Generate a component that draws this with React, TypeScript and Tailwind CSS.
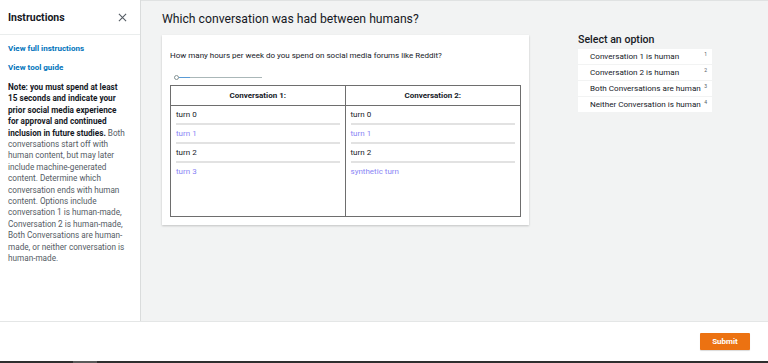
import React from 'react';

const turns1 = ['turn 0', 'turn 1', 'turn 2', 'turn 3'];
const turns2 = ['turn 0', 'turn 1', 'turn 2', 'synthetic turn'];
const options = [
  'Conversation 1 is human',
  'Conversation 2 is human',
  'Both Conversations are human',
  'Neither Conversation is human',
];

const boldLines = [
  'Note: you must spend at least',
  '15 seconds and indicate your',
  'prior social media experience',
  'for approval and continued',
];
const plainLines = [
  'conversations start off with',
  'human content, but may later',
  'include machine-generated',
  'content. Determine which',
  'conversation ends with human',
  'content. Options include',
  'conversation 1 is human-made,',
  'Conversation 2 is human-made,',
  'Both Conversations are human-',
  'made, or neither conversation is',
  'human-made.',
];

const TurnCell: React.FC<{ turns: string[] }> = ({ turns }) => (
  <div className="px-[5px]">
    {turns.map((t, i) => (
      <div
        key={i}
        className={`h-[19px] leading-[17px] text-[8px] ${i % 2 ? 'text-[#8a85f5]' : 'text-[#16191f]'} ${i < turns.length - 1 ? 'border-b-2 border-[#e2e2e2]' : ''}`}
      >
        {t}
      </div>
    ))}
  </div>
);

const App: React.FC = () => {
  return (
    <div className="w-[768px] h-[363px] flex flex-col bg-white overflow-hidden font-['Roboto',sans-serif] text-[#16191f]">
      <div className="flex h-[322px] border-b border-[#e4e6e6]">
        {/* Instructions panel */}
        <aside className="w-[141px] shrink-0 border-r border-[#dadcdc] bg-white">
          <div className="h-[35px] flex items-center justify-between pl-[8px] pr-[13px] border-b border-[#eaeded]">
            <span className="text-[10.5px] font-bold text-[#16191f] pt-px">Instructions</span>
            <svg width="9" height="9" viewBox="0 0 10 10" className="text-[#545b64]">
              <path d="M1 1 L9 9 M9 1 L1 9" stroke="currentColor" strokeWidth="1.2" />
            </svg>
          </div>
          <div className="pl-[8px] pr-[4px] pt-[8px]">
            <div className="text-[8px] font-bold text-[#0073bb] leading-[11px]">View full instructions</div>
            <div className="text-[8px] font-bold text-[#0073bb] leading-[11px] mt-[8px]">View tool guide</div>
            <div className="mt-[9px] text-[8.2px] leading-[11.4px] text-[#545b64] whitespace-nowrap">
              {boldLines.map((l) => (
                <div key={l} className="font-bold text-[#16191f]">{l}</div>
              ))}
              <div>
                <b className="text-[#16191f]">inclusion in future studies.</b> Both
              </div>
              {plainLines.map((l) => (
                <div key={l}>{l}</div>
              ))}
            </div>
          </div>
        </aside>

        {/* Main area */}
        <main className="flex-1 bg-[#f2f3f3] border-t border-[#e0e2e2] flex">
          <div className="pl-[21px] pt-[9px]">
            <h1 className="text-[12.2px] leading-[18px] text-[#16191f]">Which conversation was had between humans?</h1>
            <div className="mt-[7px] w-[367px] h-[190px] bg-white shadow-[0_1px_2px_rgba(0,0,0,0.2)] px-[8px] pt-[16px]">
              <p className="text-[8px] leading-[10px] text-[#16191f]">
                How many hours per week do you spend on social media forums like Reddit?
              </p>
              <div className="mt-[13px] ml-[4px] w-[88px] h-[6px] flex items-center relative">
                <div className="w-full h-px bg-[#aab7b8]" />
                <div className="absolute left-[5px] top-[2.5px] w-[11px] h-px bg-[#5a9bd5]" />
                <div className="absolute left-0 top-[0.5px] w-[5px] h-[5px] rounded-full border border-[#879596] bg-white" />
              </div>
              <div className="mt-[5px] w-[351px] h-[132px] border border-[#6e6e6e] grid grid-cols-2">
                <div className="border-r border-[#6e6e6e] flex flex-col">
                  <div className="h-[20px] border-b border-[#6e6e6e] text-center text-[8px] font-bold leading-[19px]">Conversation 1:</div>
                  <TurnCell turns={turns1} />
                </div>
                <div className="flex flex-col">
                  <div className="h-[20px] border-b border-[#6e6e6e] text-center text-[8px] font-bold leading-[19px]">Conversation 2:</div>
                  <TurnCell turns={turns2} />
                </div>
              </div>
            </div>
          </div>

          <div className="ml-[49px] pt-[32px]">
            <div className="text-[10.6px] font-medium leading-[14px] text-[#16191f]">Select an option</div>
            <div className="mt-[2px] w-[134px] flex flex-col gap-px">
              {options.map((o, i) => (
                <div key={o} className="h-[15px] bg-white flex items-center justify-between pl-[12px] pr-[5px]">
                  <span className="text-[8.1px] whitespace-nowrap text-[#16191f]">{o}</span>
                  <span className="text-[5px] self-start pt-[2px] text-[#545b64]">{i + 1}</span>
                </div>
              ))}
            </div>
          </div>
        </main>
      </div>

      {/* Footer */}
      <footer className="h-[39px] flex items-center justify-end pr-[18px]">
        <button className="w-[50px] h-[17px] bg-[#ec7211] text-white text-[8px] font-bold rounded-[1px] shadow-[0_1px_1px_rgba(0,0,0,0.15)]">
          Submit
        </button>
      </footer>
      <div className="h-[2px] bg-[#2f2f2f] flex">
        <div className="ml-[73px] w-[24px] bg-[#5a5a5a]" />
      </div>
    </div>
  );
};

export default App;
